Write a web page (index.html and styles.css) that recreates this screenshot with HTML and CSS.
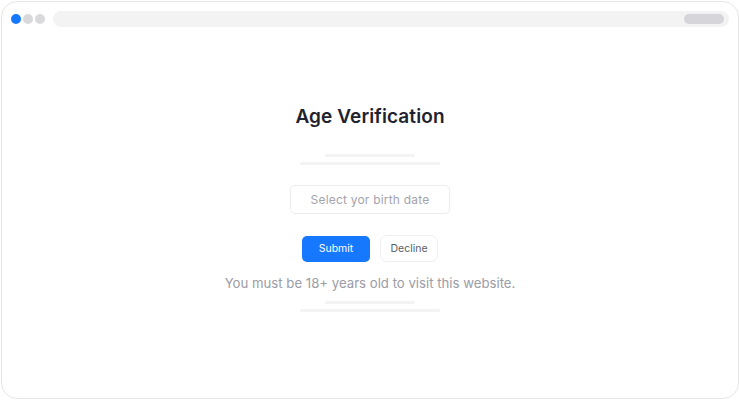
FILE: index.html
```html
<!DOCTYPE html>
<html>
<head>
<meta charset="utf-8">
<link rel="stylesheet" href="styles.css">
</head>
<body>
<div class="window">
  <div class="toolbar">
    <div class="dots">
      <span class="dot blue"></span>
      <span class="dot"></span>
      <span class="dot"></span>
    </div>
    <div class="address"><span class="pill"></span></div>
  </div>
  <div class="content">
    <h1 class="title">Age Verification</h1>
    <div class="skeleton">
      <span class="line short"></span>
      <span class="line long"></span>
    </div>
    <div class="field">Select yor birth date</div>
    <div class="actions">
      <button class="btn primary">Submit</button>
      <button class="btn secondary">Decline</button>
    </div>
    <p class="note">You must be 18+ years old to visit this website.</p>
    <div class="skeleton bottom">
      <span class="line short"></span>
      <span class="line long"></span>
    </div>
  </div>
</div>
</body>
</html>
```

FILE: styles.css
```css
html, body {
  margin: 0;
  padding: 0;
  background: #ffffff;
}
body {
  width: 740px;
  height: 400px;
  font-family: Inter, "Noto Sans", sans-serif;
}
.window {
  box-sizing: border-box;
  margin: 1px;
  width: 738px;
  height: 398px;
  border: 1px solid #e6e6e8;
  border-radius: 16px;
  background: #fff;
  display: flex;
  flex-direction: column;
}
.toolbar {
  display: flex;
  align-items: center;
  padding: 8px 8px 0 9px;
  height: 17px;
  gap: 8px;
}
.dots {
  display: flex;
  gap: 2px;
}
.dot {
  width: 10px;
  height: 10px;
  border-radius: 50%;
  background: #d9d9dc;
  display: block;
}
.dot.blue {
  background: #1677ff;
}
.address {
  flex: 1;
  height: 16px;
  border-radius: 8px;
  background: #f3f3f4;
  display: flex;
  justify-content: flex-end;
  align-items: center;
  padding-right: 5px;
  margin-right: 1px;
}
.pill {
  width: 40px;
  height: 10px;
  border-radius: 5px;
  background: #d5d5da;
}
.content {
  display: flex;
  flex-direction: column;
  align-items: center;
  padding-top: 77px;
}
.title {
  margin: 0;
  font-size: 19px;
  font-weight: 600;
  color: #1f2330;
  line-height: 26px;
  letter-spacing: 0.1px;
}
.skeleton {
  display: flex;
  flex-direction: column;
  align-items: center;
  gap: 5px;
  margin-top: 24px;
}
.line {
  display: block;
  height: 3px;
  border-radius: 2px;
  background: #f3f3f4;
}
.line.short { width: 90px; }
.line.long { width: 140px; }
.field {
  box-sizing: border-box;
  margin-top: 20px;
  width: 160px;
  height: 29px;
  border: 1px solid #ececee;
  border-radius: 5px;
  display: flex;
  align-items: center;
  justify-content: center;
  font-size: 12px;
  color: #a3a3ad;
  letter-spacing: 0.2px;
}
.actions {
  display: flex;
  gap: 10px;
  margin-top: 21px;
  align-items: center;
}
.btn {
  font-family: inherit;
  font-size: 10.5px;
  border-radius: 5px;
  height: 26px;
  padding: 0;
  cursor: pointer;
}
.btn.primary {
  width: 68px;
  background: #1677ff;
  border: none;
  color: #fff;
}
.btn.secondary {
  width: 58px;
  height: 27px;
  background: #fff;
  border: 1px solid #efeff1;
  color: #5a5d66;
  border-radius: 7px;
}
.note {
  margin: 11px 0 0;
  font-size: 13.2px;
  color: #9b9ca6;
  line-height: 20px;
}
.skeleton.bottom {
  margin-top: 8px;
}
```
